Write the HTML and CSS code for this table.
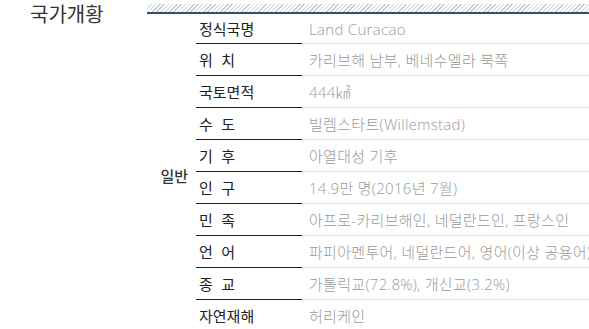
FILE: index.html
```html
<!DOCTYPE html>
<html lang="ko">
<head>
<meta charset="utf-8">
<link rel="stylesheet" href="styles.css">
</head>
<body>
<div class="page">
  <h2 class="title">국가개황</h2>
  <div class="panel">
    <div class="hatch"></div>
    <div class="table">
      <div class="group">일반</div>
      <div class="rows">
        <div class="row first"><div class="label">정식국명</div><div class="value">Land Curacao</div></div>
        <div class="row"><div class="label">위&nbsp;&nbsp;치</div><div class="value">카리브해 남부, 베네수엘라 북쪽</div></div>
        <div class="row"><div class="label">국토면적</div><div class="value">444㎢</div></div>
        <div class="row"><div class="label">수&nbsp;&nbsp;도</div><div class="value">빌렘스타트(Willemstad)</div></div>
        <div class="row"><div class="label">기&nbsp;&nbsp;후</div><div class="value">아열대성 기후</div></div>
        <div class="row"><div class="label">인&nbsp;&nbsp;구</div><div class="value">14.9만 명(2016년 7월)</div></div>
        <div class="row"><div class="label">민&nbsp;&nbsp;족</div><div class="value">아프로-카리브해인, 네덜란드인, 프랑스인</div></div>
        <div class="row"><div class="label">언&nbsp;&nbsp;어</div><div class="value">파피아멘투어, 네덜란드어, 영어(이상 공용어)</div></div>
        <div class="row"><div class="label">종&nbsp;&nbsp;교</div><div class="value">가톨릭교(72.8%), 개신교(3.2%)</div></div>
        <div class="row"><div class="label">자연재해</div><div class="value">허리케인</div></div>
      </div>
    </div>
  </div>
</div>
</body>
</html>
```
FILE: styles.css
```css
* { box-sizing: border-box; }
html, body { margin: 0; padding: 0; background: #fff; overflow: hidden; }
body {
  font-family: "Noto Sans CJK KR", "Noto Sans", sans-serif;
  color: #222;
}
.page {
  display: flex;
  width: 589px;
  height: 329px;
  overflow: hidden;
}
.title {
  margin: 0;
  width: 147px;
  flex: none;
  padding: 0 0 0 30px;
  font-size: 20px;
  font-weight: 400;
  line-height: 28px;
  color: #333;
}
.panel {
  flex: 1;
  min-width: 0;
  padding-top: 4px;
}
.hatch {
  height: 10px;
  border-bottom: 2px solid #3b4d61;
  background: repeating-linear-gradient(135deg, #c2cdd8 0 1px, #fff 1px 3px);
}
.table {
  display: flex;
}
.group {
  width: 49px;
  flex: none;
  padding-top: 151px;
  padding-right: 8px;
  text-align: right;
  font-size: 15px;
  line-height: 22px;
  font-weight: 500;
  color: #333;
}
.rows {
  flex: 1;
  min-width: 0;
}
.row {
  display: flex;
  height: 32px;
  align-items: center;
}
.row.first { height: 30px; }
.label {
  width: 106px;
  flex: none;
  height: 100%;
  display: flex;
  align-items: center;
  padding-left: 3px;
  font-size: 15px;
  color: #222;
  border-bottom: 1px solid #222;
}
.value {
  flex: 1;
  height: 100%;
  display: flex;
  align-items: center;
  padding-left: 7px;
  font-family: "Open Sans", "Noto Sans CJK KR", sans-serif;
  font-size: 15px;
  font-weight: 300;
  letter-spacing: 0.3px;
  color: #9a9a9a;
  white-space: nowrap;
  overflow: hidden;
  border-bottom: 1px solid #e0e0e0;
}
```
